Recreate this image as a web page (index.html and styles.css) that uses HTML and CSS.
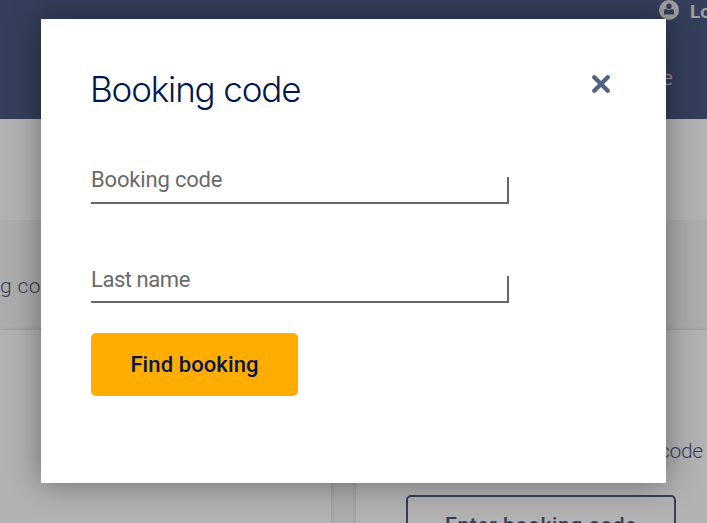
FILE: index.html
```html
<!DOCTYPE html>
<html lang="en">
<head>
    <meta charset="UTF-8">
    <meta name="viewport" content="width=device-width, initial-scale=1.0">
    <title>Booking code</title>
    <link rel="stylesheet" href="styles.css">
</head>
<body>

    <div class="page">
        <header class="header">
            <div class="login">
                <svg class="login-icon" viewBox="0 0 20 20" width="20" height="20">
                    <circle cx="10" cy="10" r="10" fill="currentColor"/>
                    <circle class="cut" cx="10" cy="6.2" r="2.7"/>
                    <path class="cut" d="M5 14.5V11Q5 9 7 9H7.6Q10 11 12.4 9H13Q15 9 15 11V14.5Z"/>
                </svg>
                <span class="login-text">Login</span>
            </div>
            <div class="nav">e</div>
        </header>
        <div class="intro"></div>
        <div class="tabs"><span class="tab">g code</span></div>
        <div class="cards">
            <div class="card card-left"></div>
            <div class="card card-right">
                <p class="card-text">code</p>
                <button class="card-button">Enter booking code</button>
            </div>
        </div>
    </div>

    <div class="overlay">
        <form class="modal">
            <div class="modal-head">
                <h1 class="title">Booking code</h1>
                <button class="close" type="button" aria-label="Close">
                    <svg viewBox="0 0 18 18" width="18" height="18">
                        <path d="M2.3 2.3L15.7 15.7M15.7 2.3L2.3 15.7" fill="none" stroke="currentColor" stroke-width="4.3" stroke-linecap="round"/>
                    </svg>
                </button>
            </div>
            <label class="field"><span class="field-label field-code">Booking code</span></label>
            <label class="field"><span class="field-label field-name">Last name</span></label>
            <button class="submit" type="button"><span>Find booking</span></button>
        </form>
    </div>

</body>
</html>
```
FILE: styles.css
```css
*, *::before, *::after {
  box-sizing: border-box;
}

body {
  margin: 0;
  height: 523px;
  overflow: hidden;
  background-color: #f6f6f6;
  color: #4d5b83;
  font-family: Roboto, "Liberation Sans", sans-serif;
}

button {
  font-family: inherit;
  cursor: pointer;
}

.page {
  height: 523px;
  overflow: hidden;
}

.header {
  height: 119px;
  background-color: #4d5b83;
  color: #e6e4e2;
}

.login {
  display: flex;
  gap: 11px;
  height: 66px;
  padding-left: 659px;
}

.login-icon {
  flex: none;
}

.cut {
  fill: #4d5b83;
}

.login-text {
  font-size: 19px;
  font-weight: 700;
  line-height: 24px;
}

.nav {
  padding-left: 662px;
  font-size: 21px;
  font-weight: 300;
  line-height: 24px;
}

.intro {
  height: 101px;
  background-color: #fff;
}

.tabs {
  height: 110px;
  padding-top: 54px;
}

.tab {
  display: block;
  font-size: 21px;
  font-weight: 300;
  line-height: 24px;
  letter-spacing: 0.4px;
}

.cards {
  display: flex;
  gap: 25px;
}

.card {
  height: 240px;
  background-color: #fff;
  box-shadow: 0 0 5px rgba(0, 0, 0, 0.12);
}

.card-left {
  flex: 0 0 331px;
}

.card-right {
  flex: 0 0 400px;
  padding: 109px 0 0 50px;
}

.card-text {
  margin: 0 0 32px;
  padding-left: 253px;
  font-size: 21px;
  font-weight: 300;
  line-height: 24px;
  letter-spacing: -0.3px;
}

.card-button {
  display: block;
  width: 270px;
  height: 60px;
  padding: 0;
  border: 2px solid #4d5b83;
  border-radius: 5px;
  background: none;
  color: #4d5b83;
  font-size: 21px;
  font-weight: 500;
  letter-spacing: 0.6px;
}

.overlay {
  position: absolute;
  inset: 0;
  padding: 19px 41px;
  background-color: rgba(0, 0, 0, 0.3);
}

.modal {
  width: 625px;
  height: 464px;
  padding: 49px 50px 0;
  background-color: #fff;
  box-shadow: 0 0 30px rgba(0, 0, 0, 0.4);
}

.modal-head {
  display: flex;
  justify-content: space-between;
  height: 86px;
}

.title {
  margin: 0 0 0 -1px;
  color: #05164d;
  font-family: Inter, sans-serif;
  font-size: 35px;
  font-weight: 300;
  line-height: 42px;
  letter-spacing: -1.15px;
  white-space: nowrap;
}

.close {
  width: 18px;
  height: 18px;
  margin: 7px 6px 0 0;
  padding: 0;
  border: none;
  background: none;
  color: #51617f;
}

.close svg {
  display: block;
}

.field {
  display: block;
  width: 418px;
  height: 50px;
  margin-bottom: 49px;
  padding-top: 13px;
  border-bottom: 2px solid #666;
  background: linear-gradient(#666, #666) right bottom / 2px 25px no-repeat;
}

.field + .field {
  margin-bottom: 30px;
  padding-top: 14px;
}

.field-label {
  display: block;
  color: #6a6a6a;
  font-size: 22px;
  line-height: 26px;
}

.field-code {
  letter-spacing: -0.17px;
}

.field-name {
  letter-spacing: -0.45px;
}

.submit {
  display: block;
  width: 207px;
  height: 63px;
  padding: 0;
  border: none;
  border-radius: 5px;
  background-color: #ffad00;
  color: #05164d;
  font-size: 22px;
  font-weight: 500;
  letter-spacing: 0.1px;
}
```
